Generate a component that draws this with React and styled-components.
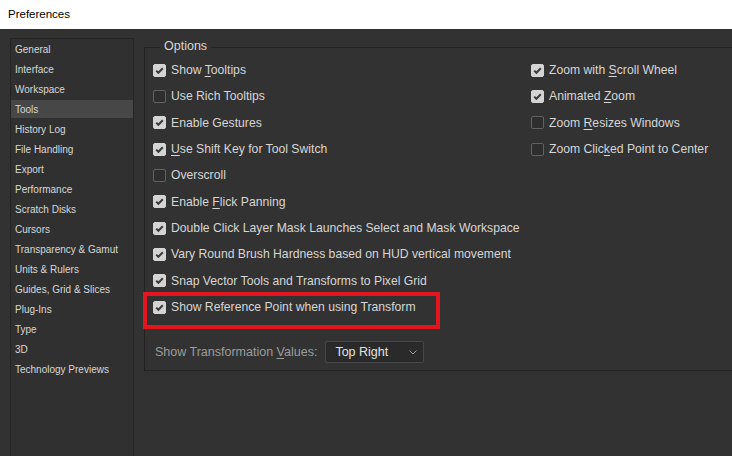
import React from "react";
import styled, { createGlobalStyle } from "styled-components";

const GlobalStyle = createGlobalStyle`
	body {
		margin: 0;
		background: #323232;
		font-family: "Liberation Sans", Arial, sans-serif;
	}
`;

const sections = [
	"General",
	"Interface",
	"Workspace",
	"Tools",
	"History Log",
	"File Handling",
	"Export",
	"Performance",
	"Scratch Disks",
	"Cursors",
	"Transparency & Gamut",
	"Units & Rulers",
	"Guides, Grid & Slices",
	"Plug-Ins",
	"Type",
	"3D",
	"Technology Previews",
];

// label parts: [before, mnemonic, after]
const leftOptions = [
	{ text: ["Show ", "T", "ooltips"], checked: true },
	{ text: ["Use Rich Tooltips"], checked: false },
	{ text: ["Enable Gestures"], checked: true },
	{ text: ["", "U", "se Shift Key for Tool Switch"], checked: true },
	{ text: ["Overscroll"], checked: false },
	{ text: ["Enable ", "F", "lick Panning"], checked: true },
	{ text: ["Double Click Layer Mask Launches Select and Mask Workspace"], checked: true },
	{ text: ["Vary Round Brush Hardness based on HUD vertical movement"], checked: true },
	{ text: ["Snap Vector Tools and Transforms to Pixel Grid"], checked: true },
	{ text: ["Show Reference Point when using Transform"], checked: true, marked: true },
];

const rightOptions = [
	{ text: ["Zoom with ", "S", "croll Wheel"], checked: true },
	{ text: ["Animated ", "Z", "oom"], checked: true },
	{ text: ["Zoom ", "R", "esizes Windows"], checked: false },
	{ text: ["Zoom Clic", "k", "ed Point to Center"], checked: false },
];

const Label = ({ parts }) => (
	<span>
		{parts[0]}
		{parts[1] && <Mnemonic>{parts[1]}</Mnemonic>}
		{parts[2]}
	</span>
);

const Check = ({ checked }) => (
	<Box checked={checked}>
		{checked && (
			<svg width="13" height="13" viewBox="0 0 13 13">
				<path d="M3.2 6.6 L5.4 8.8 L9.8 4.3" fill="none" stroke="#3a3a3a" strokeWidth="2" />
			</svg>
		)}
	</Box>
);

const Option = ({ item }) => (
	<Row>
		<Check checked={item.checked} />
		<Label parts={item.text} />
		{item.marked && <Highlight />}
	</Row>
);

const App = () => {
	return (
		<Page>
			<GlobalStyle />
			<TitleBar>Preferences</TitleBar>
			<Body>
				<Sidebar>
					{sections.map((s) => (
						<Item key={s} active={s === "Tools"}>
							{s}
						</Item>
					))}
				</Sidebar>
				<Group>
					<Legend>Options</Legend>
					<Columns>
						<Column>
							{leftOptions.map((o, i) => (
								<Option key={i} item={o} />
							))}
							<SelectRow>
								<SelectLabel>
									Show Transformation <Mnemonic>V</Mnemonic>alues:
								</SelectLabel>
								<Select>
									<span>Top Right</span>
									<svg width="8" height="5" viewBox="0 0 8 5">
										<path d="M0.5 0.5 L4 4 L7.5 0.5" fill="none" stroke="#9a9a9a" strokeWidth="1" />
									</svg>
								</Select>
							</SelectRow>
						</Column>
						<Column>
							{rightOptions.map((o, i) => (
								<Option key={i} item={o} />
							))}
						</Column>
					</Columns>
				</Group>
			</Body>
		</Page>
	);
};

export default App;

const Page = styled.div`
	width: 732px;
	height: 456px;
	overflow: hidden;
	display: flex;
	flex-direction: column;
	background: #323232;
`;

const TitleBar = styled.div`
	height: 29px;
	flex-shrink: 0;
	background: #ffffff;
	color: #000;
	font-size: 11.5px;
	display: flex;
	align-items: center;
	padding-left: 8px;
	padding-bottom: 1px;
	box-sizing: border-box;
`;

const Body = styled.div`
	display: flex;
	gap: 10px;
	padding: 9px 0 0 10px;
`;

const Sidebar = styled.div`
	width: 124px;
	height: 440px;
	flex-shrink: 0;
	box-sizing: border-box;
	border: 1px solid #242424;
	background: #303030;
	padding-top: 1px;
	display: flex;
	flex-direction: column;
`;

const Item = styled.div`
	height: 18px;
	margin-bottom: 2px;
	padding-left: 4px;
	display: flex;
	align-items: center;
	font-size: 10px;
	color: #d8d8d8;
	background: ${(p) => (p.active ? "#474747" : "transparent")};
`;

const Group = styled.div`
	margin-top: 9px;
	width: 640px;
	height: 324px;
	flex-shrink: 0;
	box-sizing: border-box;
	border: 1px solid #232323;
	display: flex;
	flex-direction: column;
`;

const Legend = styled.span`
	align-self: flex-start;
	margin: -9px 0 0 15px;
	padding: 0 4px;
	line-height: 15px;
	font-size: 12.5px;
	color: #d6d6d6;
	background: #323232;
`;

const Columns = styled.div`
	display: flex;
	padding: 3px 0 0 8px;
`;

const Column = styled.div`
	display: flex;
	flex-direction: column;
	&:first-child {
		width: 378px;
	}
`;

const Row = styled.div`
	position: relative;
	height: 26.33px;
	display: flex;
	align-items: center;
	gap: 5px;
	font-size: 12.2px;
	color: #d6d6d6;
	white-space: nowrap;
`;

const Box = styled.span`
	width: 13px;
	height: 13px;
	flex-shrink: 0;
	box-sizing: border-box;
	border-radius: 2px;
	display: flex;
	background: ${(p) => (p.checked ? "#d4d4d4" : "#2e2e2e")};
	border: 1px solid ${(p) => (p.checked ? "#d4d4d4" : "#626262")};
	svg {
		margin: -1px;
	}
`;

const Mnemonic = styled.span`
	text-decoration: underline;
	text-underline-offset: 2px;
`;

const Highlight = styled.div`
	position: absolute;
	left: -10px;
	top: -2px;
	width: 297px;
	height: 37px;
	box-sizing: border-box;
	border: 4px solid #e3161f;
	pointer-events: none;
`;

const SelectRow = styled.div`
	margin-top: 21px;
	display: flex;
	align-items: center;
	gap: 8px;
	padding-left: 2px;
`;

const SelectLabel = styled.span`
	font-size: 12.5px;
	color: #9c9c9c;
	white-space: nowrap;
`;

const Select = styled.div`
	width: 99px;
	height: 22px;
	box-sizing: border-box;
	border: 1px solid #474747;
	border-radius: 2px;
	background: #2a2a2a;
	display: flex;
	align-items: center;
	justify-content: space-between;
	padding: 0 6px 0 9px;
	font-size: 12.5px;
	color: #e2e2e2;
`;
